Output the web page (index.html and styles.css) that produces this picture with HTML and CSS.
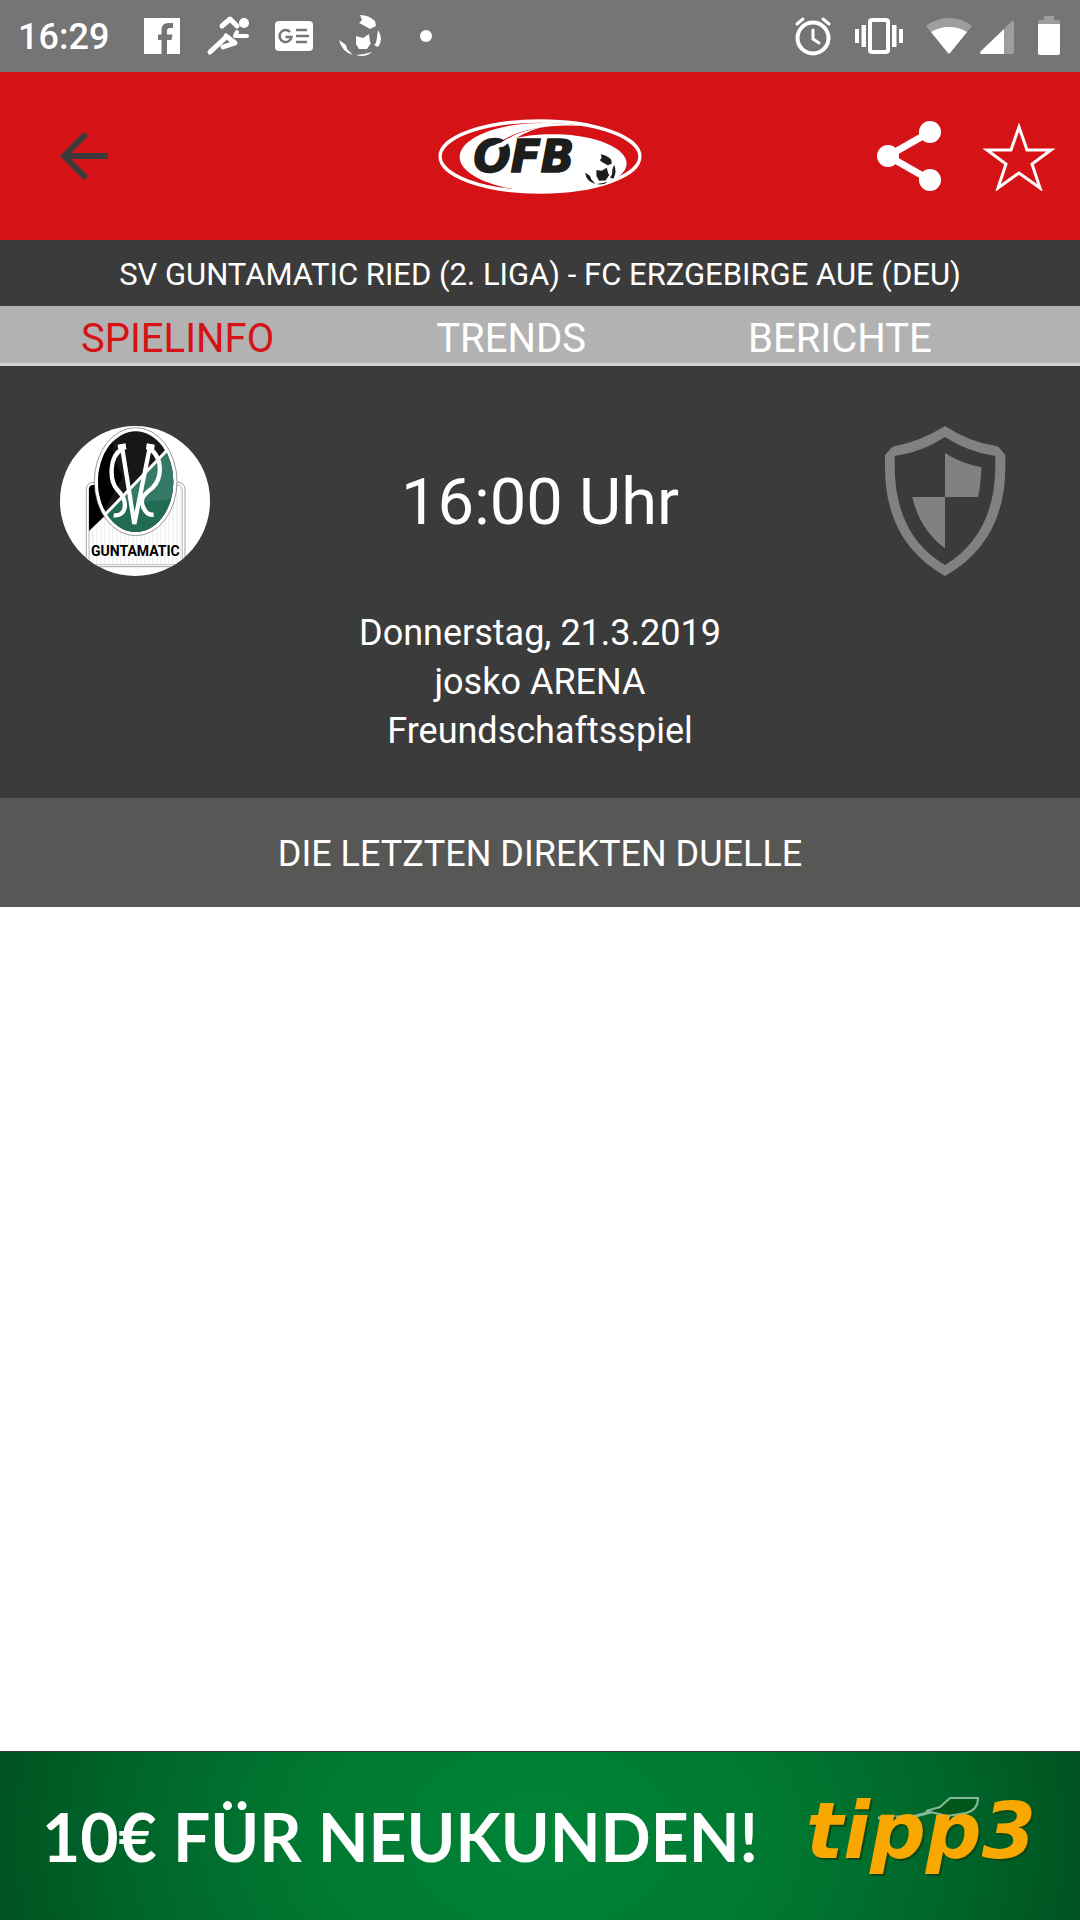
FILE: index.html
```html
<!DOCTYPE html>
<html lang="de">
<head>
    <meta charset="UTF-8">
    <meta name="viewport" content="width=device-width, initial-scale=1.0">
    <title>Spielinfo</title>
    <link rel="stylesheet" href="styles.css">
</head>
<body>
    <div class="status-bar">
        <span class="clock">16:29</span>
        <div class="notifications">
            <svg viewBox="0 0 48 48" width="48" height="48">
                <path fill="#fff" d="M6 6h36v36H29V28h4.500l1-5.500H29v-3.500q0-3 3-3h3v-5h-4.500q-7 0-7 7v4.500H20V28h3.500v14H6z"/>
            </svg>
            <svg viewBox="0 0 48 48" width="48" height="48" fill="none" stroke="#fff" stroke-width="5" stroke-linecap="round" stroke-linejoin="round">
                <path d="M18 14l8-7 7 7"/>
                <path d="M33 20l-2 4h12" stroke-width="4"/>
                <path d="M6 40l14-13"/>
                <path d="M22 24l9 7-12 4" stroke-width="5"/>
                <circle cx="40" cy="11" r="5" fill="#fff" stroke="none"/>
            </svg>
            <svg viewBox="0 0 48 48" width="48" height="48">
                <rect x="5" y="9" width="38" height="30" rx="4" fill="#fff"/>
                <g fill="none" stroke="#757575" stroke-width="2.500">
                    <path d="M20 20a6 6 0 1 0 1.500 5h-6"/>
                    <path d="M26 18h11M26 24h13M26 30h11"/>
                </g>
            </svg>
            <svg viewBox="0 0 48 48" width="48" height="48" fill="#fff">
                <path d="M24 3q9 0 15 6l1 5-6 3-7-4-4-2 3-3z"/>
                <path d="M42 18q6 9 0 17l-4-2 2-2 1-6z"/>
                <path d="M20 24l7 2 6-4 1 8 1 1-4 6h-8l-3-5z"/>
                <path d="M3 28l7 5 1 4 6 6Q6 40 3 28z"/>
                <path d="M20 43l8-1 8-2q-7 6-16 3z"/>
            </svg>
            <svg viewBox="0 0 48 48" width="48" height="48">
                <circle cx="24" cy="24" r="6" fill="#fff"/>
            </svg>
        </div>
        <div class="system-icons">
            <svg viewBox="0 0 38 40" width="38" height="40" fill="none" stroke="#fff" stroke-linecap="round">
                <circle cx="19" cy="22" r="15.500" stroke-width="4"/>
                <path d="M19 14v9l6 4M3 8l6-5M35 8l-6-5" stroke-width="3"/>
            </svg>
            <svg viewBox="0 0 50 40" width="50" height="40" fill="#fff">
                <path d="M1 13h4v14H1zM7.500 9h4.500v22H7.500zM38 9h4.500v22H38zM45 13h4v14h-4z"/>
                <rect x="16" y="4" width="18" height="32" rx="2" fill="none" stroke="#fff" stroke-width="4"/>
            </svg>
            <svg viewBox="0 0 46 40" width="46" height="40">
                <path fill="#9e9e9e" d="M0 10q10-8 23-8t23 8L24 37q-1 1-2 0z"/>
                <path fill="#fff" d="M5 16q8-5 18-5t18 5L24 37q-1 1-2 0z"/>
            </svg>
            <svg viewBox="0 0 34 40" width="34" height="40">
                <path fill="#9e9e9e" d="M24 13l8-8q2-1 2 1v31q0 1-1 1h-9z"/>
                <path fill="#fff" d="M24 13v25H1q-2-1 0-3z"/>
            </svg>
            <svg class="battery" viewBox="0 0 22 40" width="22" height="40">
                <path fill="#9e9e9e" d="M6 0h10v4h4q2 0 2 2v3H0V6q0-2 2-2h4z"/>
                <path fill="#fff" d="M0 8h22v29q0 2-2 2H2q-2 0-2-2z"/>
            </svg>
        </div>
    </div>

    <header class="app-header">
        <button class="icon-button back" aria-label="Zurück">
            <svg viewBox="0 0 48 48" width="48" height="48" fill="none" stroke="#3b3b3b" stroke-width="6">
                <path d="M48 24H5M26 2L4 24l22 22"/>
            </svg>
        </button>
        <svg class="oefb-logo" viewBox="54 42 612 226" width="204" height="75">
            <ellipse cx="360" cy="155" rx="301" ry="107" fill="none" stroke="#fff" stroke-width="10"/>
            <path fill="#fff" d="M118 157C118 98 238 52 375 54c55 0 90 4 125 10-110-9-206 8-266 50 55-19 110-27 176-26 120 2 211 42 211 88 0 52-110 84-222 88-150 0-281-48-281-107z"/>
            <text class="logo-text" x="160" y="201">OFB</text>
            <path fill="#fff" d="M203 137q16-18 40-24 50-34 120-46-70 22-112 58-26 4-36 18z"/>
            <circle cx="541" cy="193" r="49" fill="#fff"/>
            <g fill="#1d1d1b">
                <path d="M543 148q20 3 32 17l1 12-12 4-16-9-8-6 6-7z"/>
                <path d="M530 196l16 2 15-9 5 18 3 3-11 17-20 1-8-14z"/>
                <path d="M583 180q10 20-2 42l-10-4 6-9 1-15z"/>
                <path d="M496 203l15 11 3 9 13 15q-28-8-31-35z"/>
                <path d="M530 238l20-3 16-5q-14 12-36 8z"/>
            </g>
        </svg>
        <div class="header-actions">
            <button class="icon-button" aria-label="Teilen">
                <svg viewBox="0 0 64 70" width="64" height="70" fill="#fff">
                    <path d="M53 11L11 35l42 24" fill="none" stroke="#fff" stroke-width="7"/>
                    <circle cx="53" cy="11" r="11"/>
                    <circle cx="11" cy="35" r="11"/>
                    <circle cx="53" cy="59" r="11"/>
                </svg>
            </button>
            <button class="icon-button" aria-label="Favorit">
                <svg viewBox="0 0 74 70" width="74" height="70" fill="none" stroke="#fff" stroke-width="3">
                    <path d="M37 6l8 23h24L50 43l8 24-21-15-21 15 8-24L5 29h24z"/>
                </svg>
            </button>
        </div>
    </header>

    <h1 class="match-title">SV GUNTAMATIC RIED (2. LIGA) - FC ERZGEBIRGE AUE (DEU)</h1>

    <nav class="tabs">
        <a href="#spielinfo" class="active">SPIELINFO</a>
        <a href="#trends">TRENDS</a>
        <a href="#berichte">BERICHTE</a>
    </nav>

    <main>
        <section class="match" id="spielinfo">
            <div class="teams">
                <svg class="crest" viewBox="60 48 450 450" width="150" height="150">
                    <defs>
                        <clipPath id="round"><circle cx="285" cy="273" r="225"/></clipPath>
                        <clipPath id="oval"><ellipse cx="287" cy="215" rx="113" ry="151"/></clipPath>
                        <pattern id="stripes" width="12" height="12" patternUnits="userSpaceOnUse">
                            <path d="M0 0h5v12H0z" fill="#f2f2f2"/>
                        </pattern>
                    </defs>
                    <g clip-path="url(#round)">
                        <path fill="#fff" d="M60 48h450v450H60z"/>
                        <rect x="139" y="217" width="296" height="253" rx="20" fill="#fff" stroke="#777" stroke-width="2"/>
                        <rect x="147" y="225" width="280" height="239" rx="14" fill="url(#stripes)" stroke="#999" stroke-width="2"/>
                        <path fill="#000" d="M147 235q2-10 14-10h80v48l-94 90z"/>
                        <ellipse cx="287" cy="215" rx="124" ry="162" fill="#fff" stroke="#666" stroke-width="2"/>
                        <g clip-path="url(#oval)">
                            <path fill="#17171a" d="M160 50h250v330H160z"/>
                            <path fill="#000" d="M160 50h60q-12 80 28 150l-88 160z"/>
                            <path fill="#216b55" d="M180 326L410 98v290H180z"/>
                            <path fill="#347a67" d="M400 108L240 267q70 15 165-3z"/>
                        </g>
                        <path d="M196 313L381 121" stroke="#fff" stroke-width="9"/>
                        <g fill="none" stroke="#fff" stroke-width="13">
                            <path d="M245 104L283 342 331 104"/>
                            <path d="M243 120c-34 18-36 90-12 118 40 42 24 82-10 78"/>
                            <path d="M335 120c32 28 32 82 4 112-28 22-40 34-30 58 8 20 18 26 32 24"/>
                            <path d="M234 113l24-4M319 109l24 4" stroke-width="18"/>
                        </g>
                        <text class="crest-text" x="286" y="438">GUNTAMATIC</text>
                    </g>
                </svg>
                <div class="kickoff">16:00 Uhr</div>
                <svg class="crest" viewBox="30 48 450 450" width="150" height="150" fill="#818181">
                    <path fill-rule="evenodd" d="M255 48q73 48 153 60l8 3 20 24v35q0 226-181 328Q74 396 75 170v-35l22-24 8-3q77-14 150-60zM255 81q-69 46-151 57v28q0 210 151 299 151-92 151-299v-28q-80-11-151-57z"/>
                    <path d="M255 129q50 32 109 43-1 52-10 89h-99zM157 261h98v154q-76-56-98-154z"/>
                </svg>
            </div>
            <p class="match-details">
                Donnerstag, 21.3.2019<br>
                josko ARENA<br>
                Freundschaftsspiel
            </p>
        </section>
        <h2 class="section-title">DIE LETZTEN DIREKTEN DUELLE</h2>
    </main>

    <a class="ad" href="#tipp3">
        <span class="ad-text">10€ FÜR NEUKUNDEN!</span>
        <svg class="ad-logo" viewBox="0 0 240 80" width="240" height="80">
            <path fill="none" stroke="#86b89b" stroke-width="3" d="M72 22l38-2 22-6"/>
            <path fill="#00571a" stroke="#86b89b" stroke-width="2" d="M120 15l14-4 10-9h28q0 12-12 15l-18 3z"/>
            <text class="ad-brand ad-shadow" x="2" y="64">tipp3</text>
            <text class="ad-brand" x="0" y="62">tipp3</text>
        </svg>
    </a>
</body>
</html>
```
FILE: styles.css
```css
* {
    box-sizing: border-box;
}
body {
    display: flex;
    flex-direction: column;
    min-height: 100vh;
    margin: 0;
    font-family: Roboto, "Liberation Sans", sans-serif;
    color: #fff;
    background-color: #fff;
}
svg {
    display: block;
    flex: none;
}
a {
    color: inherit;
    text-decoration: none;
}

/* Status bar */
.status-bar {
    display: flex;
    align-items: center;
    height: 72px;
    padding: 0 20px 0 18px;
    background-color: #757575;
}
.clock {
    width: 120px;
    padding-top: 2px;
    font-size: 36px;
    font-weight: 500;
}
.notifications {
    display: flex;
    gap: 18px;
}
.system-icons {
    display: flex;
    align-items: center;
    gap: 22px;
    margin-left: auto;
}
.system-icons svg + svg + svg + svg {
    margin-left: -14px;
}
.system-icons .battery.battery {
    margin-left: 2px;
}

/* Header */
.app-header {
    display: grid;
    grid-template-columns: 1fr auto 1fr;
    align-items: center;
    height: 168px;
    padding: 0 24px 0 60px;
    background-color: #d51317;
}
.icon-button {
    padding: 0;
    border: none;
    background: none;
    cursor: pointer;
}
.back {
    justify-self: start;
}
.oefb-logo {
    margin-left: -36px;
}
.header-actions {
    display: flex;
    justify-content: flex-end;
    gap: 41px;
}
.logo-text {
    font: italic bold 132px "DejaVu Sans", sans-serif;
    fill: #1d1d1b;
    stroke: #1d1d1b;
    stroke-width: 5px;
}
.match-title {
    margin: 0;
    padding: 17px 0 13px;
    font-size: 31px;
    font-weight: 400;
    line-height: 36px;
    text-align: center;
    background-color: #3b3b3b;
}

/* Tabs */
.tabs {
    display: flex;
    border-bottom: 3px solid #d0d0d0;
    background-color: #b2b2b2;
}
.tabs a {
    padding: 9px 81px 0;
    font-size: 40px;
    line-height: 48px;
}
.tabs .active {
    color: #d51317;
}

/* Match info */
.match {
    padding: 60px 60px 42px;
    background-color: #3b3b3b;
}
.teams {
    display: flex;
    align-items: center;
    justify-content: space-between;
}
.crest-text {
    font: bold 42px Roboto, sans-serif;
    fill: #000;
    text-anchor: middle;
}
.kickoff {
    padding-top: 2px;
    font-size: 65px;
}
.match-details {
    margin: 33px 0 0;
    font-size: 36px;
    line-height: 49px;
    text-align: center;
}
.section-title {
    margin: 0;
    padding: 34px 0 30px;
    font-size: 36px;
    font-weight: 400;
    line-height: 45px;
    text-align: center;
    background-color: #575756;
}

/* Ad banner */
.ad {
    display: flex;
    align-items: center;
    justify-content: space-between;
    height: 169px;
    margin-top: auto;
    padding: 0 34px 0 42px;
    border-top: 1px solid #3b3b3b;
    background: radial-gradient(ellipse 600px 420px at center, #008437, #007831 40%, #006329 72%, #004c1c);
}
.ad-text {
    font: bold 66px Lato, sans-serif;
}
.ad-brand {
    font: italic bold 78px "DejaVu Sans", sans-serif;
    fill: #f9a800;
}
.ad-shadow {
    fill: #0b4a16;
}
.ad-logo {
    overflow: visible;
}
```
